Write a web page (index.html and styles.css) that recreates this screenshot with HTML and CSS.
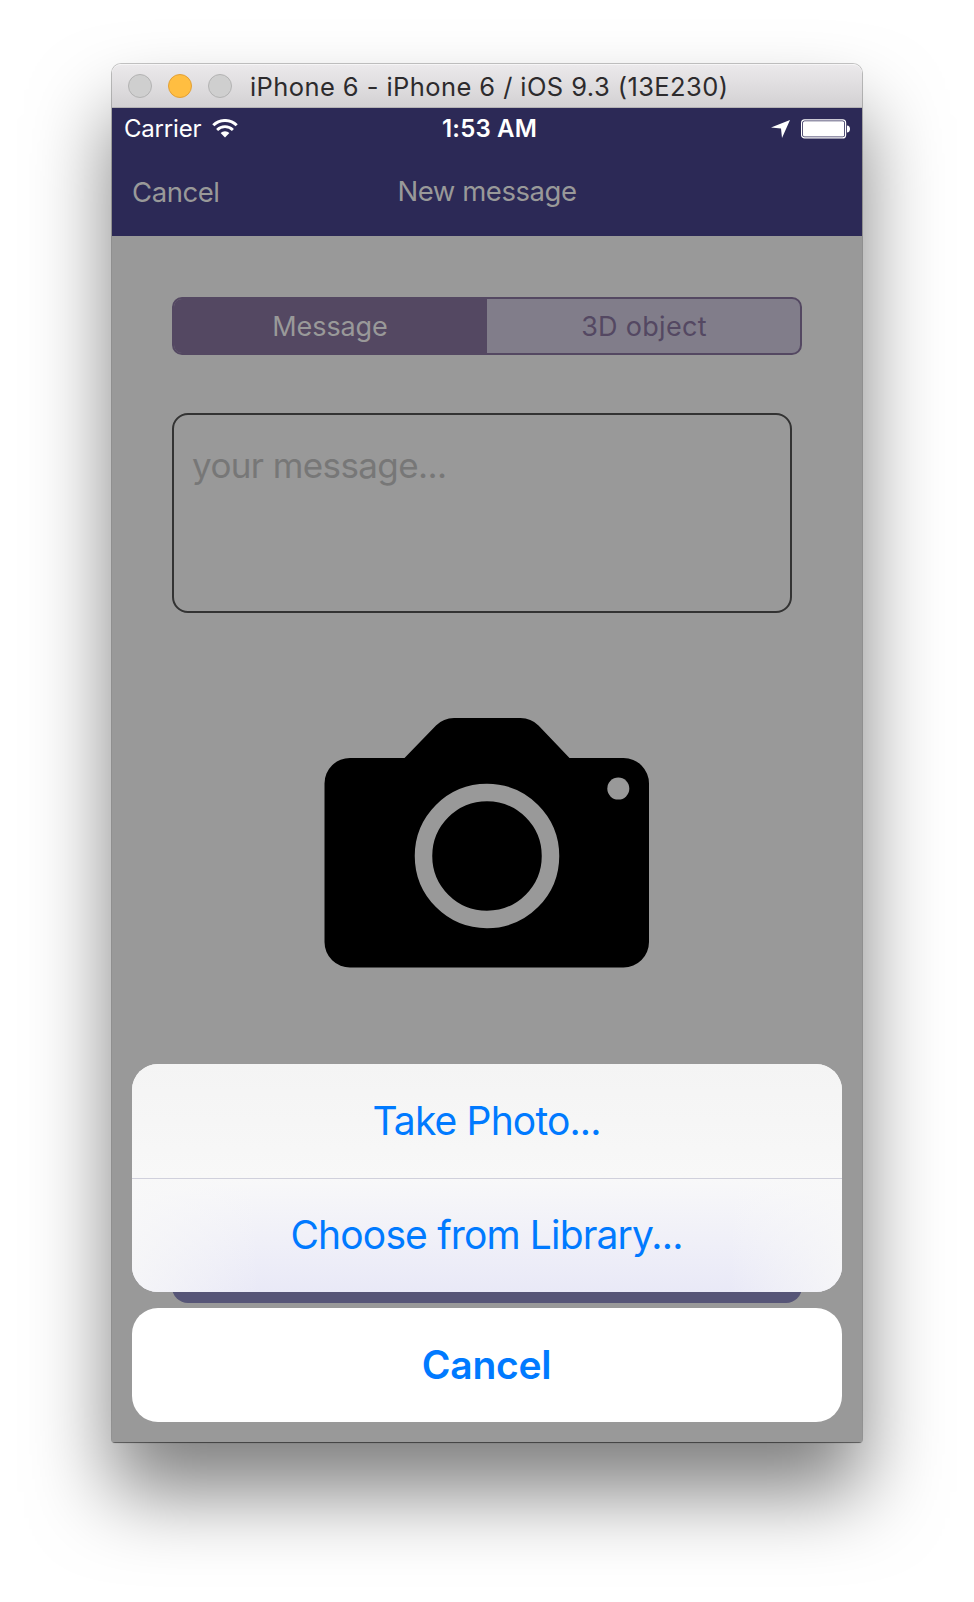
FILE: index.html
```html
<!DOCTYPE html>
<html lang="en">
<head>
<meta charset="utf-8">
<title>New message</title>
<link rel="stylesheet" href="styles.css">
</head>
<body>
<main class="window">
  <header class="titlebar">
    <span class="light"></span><span class="light light-min"></span><span class="light"></span>
    <span class="window-title">iPhone 6 - iPhone 6 / iOS 9.3 (13E230)</span>
  </header>
  <section class="screen">
    <div class="statusbar">
      <div class="status-left">
        <span class="carrier">Carrier</span>
        <svg class="wifi" width="26" height="19" viewBox="0 0 26 19"><g fill="none" stroke="#fff"><path d="M1.300 6.300a16.600 16.600 0 0 1 23.400 0" stroke-width="3"/><path d="M5.100 10.900a11.200 11.200 0 0 1 15.800 0" stroke-width="2.800"/></g><path d="M13 18.400 8.600 14a6.200 6.200 0 0 1 8.800 0Z" fill="#fff"/></svg>
      </div>
      <span class="clock">1:53 AM</span>
      <div class="status-right">
        <svg width="20" height="20" viewBox="0 0 20 20"><path d="M19 1 11 19 10 9.600 0 8.400Z" fill="#fff"/></svg>
        <svg width="50" height="20" viewBox="0 0 50 20"><rect x=".6" y=".9" width="44" height="18" rx="3" fill="none" stroke="#fff" stroke-width="1.2"/><rect x="2" y="2.300" width="41.200" height="15.200" rx="1.500" fill="#fff"/><path d="M46 6.500c4 0 4 7 0 7Z" fill="#fff"/></svg>
      </div>
    </div>
    <nav class="navbar">
      <span class="nav-cancel">Cancel</span>
      <span class="nav-title">New message</span>
    </nav>
    <div class="content">
      <div class="segments">
        <div class="segment segment-on"><span class="t-message">Message</span></div>
        <div class="segment"><span class="t-object">3D object</span></div>
      </div>
      <div class="message-box"><span class="placeholder">your message...</span></div>
      <svg class="camera" width="326" height="251" viewBox="0 0 326 251">
        <path d="M26.500 41H80.500L112 8.500Q119.500 1 130 1H196.500Q207 1 214.500 8.500L245.500 41H299.500A25.500 25.500 0 0 1 325 66.500V225A25.500 25.500 0 0 1 299.500 250.500H26.500A25.500 25.500 0 0 1 .5 225V66.500A25.500 25.500 0 0 1 26.500 41Z"/>
        <circle cx="163" cy="139" r="63.500" fill="none" stroke="#999" stroke-width="17.500"/>
        <circle cx="294.300" cy="71.600" r="11" fill="#999"/>
      </svg>
      <div class="send-button"></div>
    </div>
    <div class="sheet">
      <div class="sheet-group">
        <div class="sheet-row"><span class="t-take">Take Photo...</span></div>
        <div class="sheet-row sheet-row-tinted"><span class="t-choose">Choose from Library...</span></div>
      </div>
      <div class="sheet-cancel"><span class="t-cancel">Cancel</span></div>
    </div>
  </section>
</main>
</body>
</html>
```

FILE: styles.css
```css
* { box-sizing: border-box; }
body {
  margin: 0;
  padding: 64px 112px 0;
  height: 1602px;
  overflow: hidden;
  background: #fff;
  font-family: Inter, "Liberation Sans", sans-serif;
  white-space: nowrap;
}
.window {
  width: 750px;
  height: 1378px;
  border-radius: 9px 9px 3px 3px;
  box-shadow: 0 0 0 1px rgba(0,0,0,.22), 0 1px 1px rgba(0,0,0,.4), 0 50px 80px rgba(0,0,0,.5);
}
.titlebar {
  height: 44px;
  display: flex;
  align-items: center;
  gap: 16px;
  padding-left: 16px;
  border-radius: 9px 9px 0 0;
  background: linear-gradient(#ebe9eb, #d3d1d3);
  border-top: 1px solid #f6f5f6;
  border-bottom: 1px solid #b4b2b4;
}
.light {
  width: 24px;
  height: 24px;
  border-radius: 50%;
  background: #cfcfcf;
  border: 1px solid #b3b3b3;
}
.light-min { background: #ffbe41; border-color: #e2a036; }
.window-title {
  margin-left: 2px;
  font-size: 25.500px;
  letter-spacing: .42px;
  color: #2d2b2d;
}
.screen {
  position: relative;
  height: 1334px;
  background: #999;
}
.statusbar {
  height: 40px;
  display: grid;
  grid-template-columns: 1fr auto 1fr;
  align-items: center;
  padding: 1px 11px 0 12px;
  background: #2c2956;
  color: #fff;
  font-size: 24px;
}
.status-left, .status-right { display: flex; align-items: center; }
.status-left { gap: 11px; }
.status-right { justify-content: flex-end; gap: 10px; }
.carrier { letter-spacing: -.2px; }
.clock { font-weight: 600; letter-spacing: .15px; padding-left: 4px; }
.navbar {
  height: 88px;
  display: grid;
  grid-template-columns: 1fr auto 1fr;
  align-items: center;
  padding: 0 20px;
  background: #2c2956;
  color: #999;
  font-size: 27.500px;
  letter-spacing: -.45px;
}
.nav-title { padding: 0 0 2px; }
.content {
  height: 1206px;
  display: flex;
  flex-direction: column;
  padding: 61px 60px 0;
}
.segments {
  height: 58px;
  display: grid;
  grid-template-columns: 1fr 1fr;
  border: 2px solid #544862;
  border-radius: 10px;
  overflow: hidden;
  background: #817d8a;
  color: #544862;
  font-size: 27px;
}
.segment { display: flex; align-items: center; justify-content: center; }
.segment-on { background: #544862; color: #999; }
.t-message { letter-spacing: -.1px; padding-right: 1px; }
.t-object { letter-spacing: .3px; padding-left: 1px; }
.message-box {
  width: 620px;
  height: 200px;
  margin-top: 58px;
  padding: 27px 18px;
  border: 2px solid #333;
  border-radius: 16px;
  color: #777;
  font-size: 35px;
  line-height: 46px;
  letter-spacing: -.6px;
}
.camera { margin: 104px 0 0 152px; }
.send-button {
  height: 90px;
  margin-top: 245px;
  border-radius: 16px;
  background: #565577;
}
.sheet {
  position: absolute;
  left: 20px;
  right: 20px;
  bottom: 20px;
  display: grid;
  gap: 16px;
  color: #007aff;
  font-size: 39px;
}
.sheet-group, .sheet-cancel { border-radius: 26px; overflow: hidden; }
.sheet-group { background: #f8f8f8; }
.sheet-row, .sheet-cancel {
  height: 114px;
  display: flex;
  align-items: center;
  justify-content: center;
  padding: 0 1px 2px 0;
}
.sheet-row {
  background: linear-gradient(#f4f4f4, #f8f8f8);
  letter-spacing: -.85px;
}
.sheet-row-tinted {
  border-top: 1px solid #d0d0dc;
  background: linear-gradient(90deg, rgba(248,248,248,.8), transparent 18%, transparent 84%, rgba(248,248,248,.8)), linear-gradient(#f8f8f9, #e9e9f7);
}
.sheet-cancel { background: #fff; font-weight: 600; letter-spacing: -.25px; }
```
